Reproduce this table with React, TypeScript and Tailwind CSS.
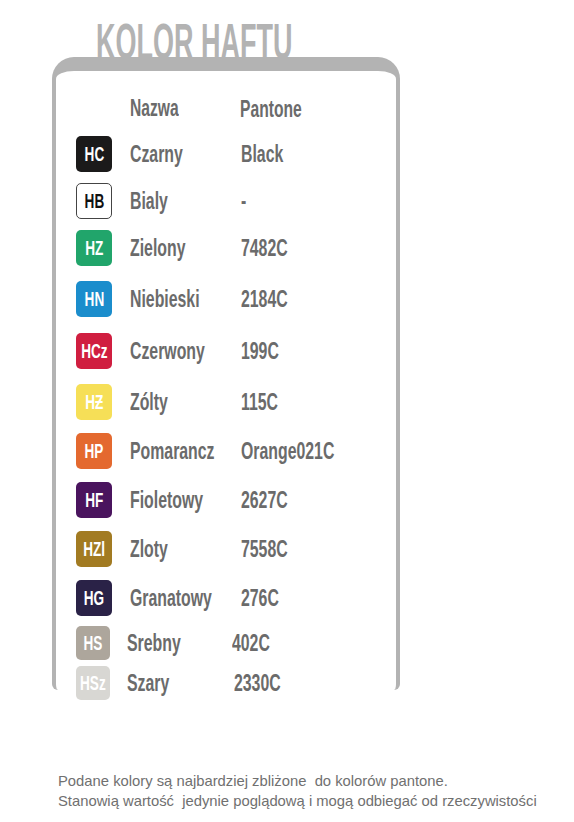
const font = "font-['Liberation_Sans',Arial,sans-serif]";

type Row = {
	code: string;
	name: string;
	pantone: string;
	badge: string;
	mt: string;
	small?: boolean;
	pantoneClass?: string;
};

const rows: Row[] = [
	{ code: "HC", name: "Czarny", pantone: "Black", badge: "bg-[#1b1a1a] text-white", mt: "mt-[10px]" },
	{ code: "HB", name: "Bialy", pantone: "-", badge: "bg-white text-[#111] border border-[#444]", mt: "mt-[11px]" },
	{ code: "HZ", name: "Zielony", pantone: "7482C", badge: "bg-[#21a56b] text-white", mt: "mt-[11px]" },
	{ code: "HN", name: "Niebieski", pantone: "2184C", badge: "bg-[#1b8dcc] text-white", mt: "mt-[15px]" },
	{ code: "HCz", name: "Czerwony", pantone: "199C", badge: "bg-[#d01e40] text-white", mt: "mt-[16px]" },
	{ code: "HƵ", name: "Zólty", pantone: "115C", badge: "bg-[#f6df57] text-white", mt: "mt-[15px]" },
	{ code: "HP", name: "Pomarancz", pantone: "Orange021C", badge: "bg-[#e4692f] text-white", mt: "mt-[13px]" },
	{ code: "HF", name: "Fioletowy", pantone: "2627C", badge: "bg-[#4a145e] text-white", mt: "mt-[13px]" },
	{ code: "HZl", name: "Zloty", pantone: "7558C", badge: "bg-[#a27b22] text-white", mt: "mt-[13px]" },
	{ code: "HG", name: "Granatowy", pantone: "276C", badge: "bg-[#2a2247] text-white", mt: "mt-[13px]" },
	{ code: "HS", name: "Srebny", pantone: "402C", badge: "bg-[#ada69c] text-white", mt: "mt-[9px]", small: true },
	{ code: "HSz", name: "Szary", pantone: "2330C", badge: "bg-[#d8d7d3] text-white", mt: "mt-[4px]", small: true, pantoneClass: "ml-[2px]" },
];

function Badge({ row }: { row: Row }) {
	return (
		<div
			className={`${row.badge} ${row.small ? "w-[34px] h-[34px]" : "w-[36px] h-[36px]"} shrink-0 rounded-[5px] flex items-center justify-center`}
		>
			<span className="inline-block scale-x-[0.68] text-[20px] font-bold leading-none whitespace-nowrap">
				{row.code}
			</span>
		</div>
	);
}

function ColorRow({ row }: { row: Row }) {
	return (
		<div className={`${row.mt} flex items-center h-[36px]`}>
			<Badge row={row} />
			<div className={`${row.small ? "ml-[17px] w-[105px]" : "ml-[18px] w-[111px]"} pt-[3px]`}>
				<span className="inline-block origin-left scale-x-[0.66] text-[24px] font-bold leading-none text-[#6b6b6b] whitespace-nowrap">
					{row.name}
				</span>
			</div>
			<div className={`${row.pantoneClass ?? ""} pt-[3px]`}>
				<span className="inline-block origin-left scale-x-[0.66] text-[24px] font-bold leading-none text-[#6b6b6b] whitespace-nowrap">
					{row.pantone}
				</span>
			</div>
		</div>
	);
}

export default function App() {
	return (
		<div className={`${font} w-[574px] h-[822px] bg-white overflow-hidden`}>
			{/* Title */}
			<div className="pl-[96px] pt-[17px] h-[67px]">
				<h1 className="inline-block origin-left scale-x-[0.54] text-[50px] font-bold leading-none text-[#b3b3b3] whitespace-nowrap">
					KOLOR HAFTU
				</h1>
			</div>

			{/* Frame */}
			<div className="-mt-[10px] ml-[52px] w-[348px] h-[633px] border-t-[14px] border-x-[4px] border-b-0 border-solid border-[#b3b3b3] rounded-t-[22px] rounded-b-[6px] pl-[20px]">
				<div className="mt-[19px] flex items-center h-[36px] pt-[3px]">
					<div className="ml-[54px] w-[110px]">
						<span className="inline-block origin-left scale-x-[0.68] text-[23px] font-bold leading-none text-[#6b6b6b]">
							Nazwa
						</span>
					</div>
					<span className="inline-block origin-left scale-x-[0.68] text-[23px] font-bold leading-none text-[#6b6b6b]">
						Pantone
					</span>
				</div>
				{rows.map((r) => (
					<ColorRow key={r.code} row={r} />
				))}
			</div>

			{/* Footer note */}
			<div className="mt-[81px] pl-[58px] text-[14.8px] leading-[20px] text-[#707070] whitespace-pre">
				<p>Podane kolory są najbardziej zbliżone  do kolorów pantone.</p>
				<p>Stanowią wartość  jedynie poglądową i mogą odbiegać od rzeczywistości</p>
			</div>
		</div>
	);
}
